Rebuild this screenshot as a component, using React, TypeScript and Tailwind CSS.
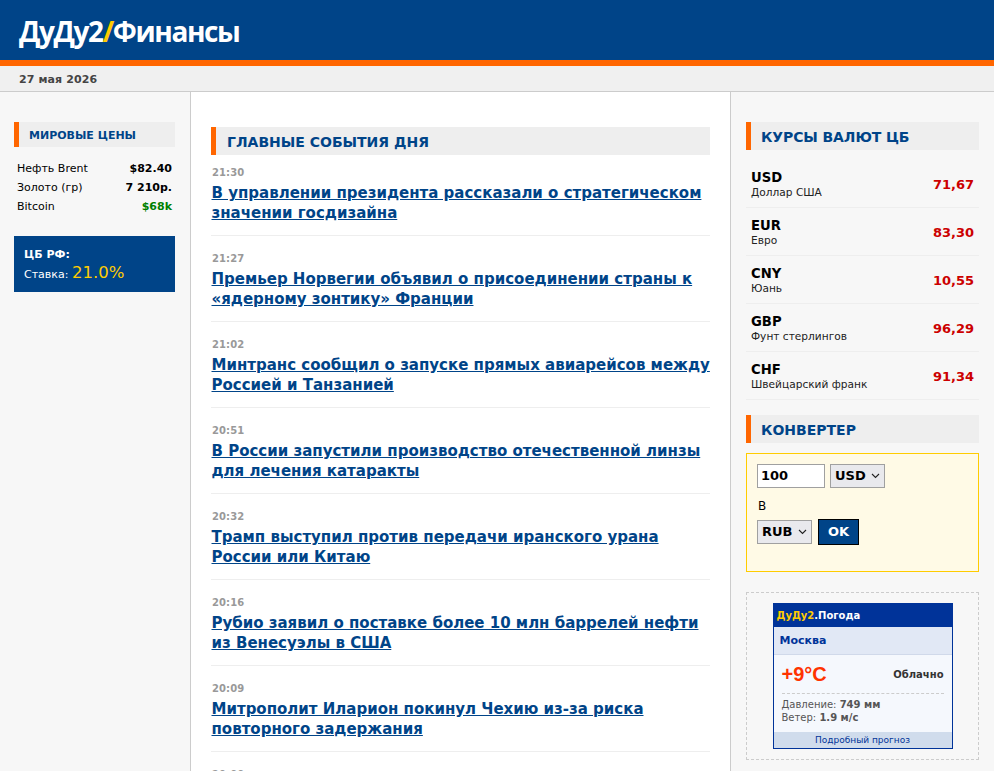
const news = [
  ["21:30", "В управлении президента рассказали о стратегическом значении госдизайна"],
  ["21:27", "Премьер Норвегии объявил о присоединении страны к «ядерному зонтику» Франции"],
  ["21:02", "Минтранс сообщил о запуске прямых авиарейсов между Россией и Танзанией"],
  ["20:51", "В России запустили производство отечественной линзы для лечения катаракты"],
  ["20:32", "Трамп выступил против передачи иранского урана России или Китаю"],
  ["20:16", "Рубио заявил о поставке более 10 млн баррелей нефти из Венесуэлы в США"],
  ["20:09", "Митрополит Иларион покинул Чехию из-за риска повторного задержания"],
  ["20:00", ""],
];
const rates = [
  ["USD", "Доллар США", "71,67"],
  ["EUR", "Евро", "83,30"],
  ["CNY", "Юань", "10,55"],
  ["GBP", "Фунт стерлингов", "96,29"],
  ["CHF", "Швейцарский франк", "91,34"],
];
const Chevron = () => (
  <svg width="9" height="6" viewBox="0 0 9 6" fill="none" stroke="#222" strokeWidth="1.1"><path d="M1 1l3.5 3.5L8 1" /></svg>
);
function Sel({ label, w }: { label: string; w: string }) {
  return (
    <div className={`${w} h-[24px] bg-[#e9e9ed] border border-[#a0a0a0] flex items-center justify-between pl-[4px] pr-[4px] text-[13px] font-bold text-black`}>
      <span>{label}</span><Chevron />
    </div>
  );
}
function Title({ children, cls }: { children: React.ReactNode; cls: string }) {
  return (
    <div className={`bg-[#eeeeee] border-l-[5px] border-[#ff6600] pl-[10px] font-bold text-[#004488] flex items-center ${cls}`}>{children}</div>
  );
}
export default function App() {
  return (
    <div className="h-screen overflow-hidden flex flex-col bg-white font-['DejaVu_Sans','Verdana',sans-serif]">
      <header className="h-[66px] shrink-0 bg-[#004488] border-b-[6px] border-[#ff6600] pl-[19px] pt-[2px] flex items-center">
        <div className="text-[28px] font-bold text-white font-['Open_Sans',sans-serif] tracking-[-1.4px] leading-none">ДуДу2<span className="text-[#ffcc00]">/</span>Финансы</div>
      </header>
      <div className="h-[26px] shrink-0 bg-[#f0f0f0] border-b border-[#cccccc] pl-[19px] pt-[3px] flex items-center text-[11px] font-bold text-[#444444] tracking-[0.1px]">27 мая 2026</div>
      <div className="flex flex-1 min-h-0">
        <aside className="w-[191px] shrink-0 bg-[#f7f7f7] border-r border-[#cccccc] pl-[14px] pr-[15px] pt-[30px]">
          <Title cls="h-[25px] text-[11px] pt-[3px]">МИРОВЫЕ ЦЕНЫ</Title>
          <div className="mt-[13px] px-[3px] text-[11px] text-black">
            <div className="h-[19px] flex items-center justify-between"><span>Нефть Brent</span><b>$82.40</b></div>
            <div className="h-[19px] flex items-center justify-between"><span>Золото (гр)</span><b>7 210р.</b></div>
            <div className="h-[19px] flex items-center justify-between"><span>Bitcoin</span><b className="text-[#008000]">$68k</b></div>
          </div>
          <div className="mt-[19px] h-[56px] bg-[#004488] text-white pl-[10px] pt-[12px] text-[11px]">
            <div className="font-bold leading-[13px]">ЦБ РФ:</div>
            <div className="leading-[22px] mt-[1px]">Ставка: <span className="text-[16.5px] text-[#ffcc00]">21.0%</span></div>
          </div>
        </aside>
        <main className="w-[539px] shrink-0 px-[20px] pt-[35px]">
          <Title cls="h-[28px] text-[14px] pl-[11px] pt-[2px]">ГЛАВНЫЕ СОБЫТИЯ ДНЯ</Title>
          <div className="mt-[11px]">
            {news.map(([t, h]) => (
              <div key={t} className="h-[70px] mb-[16px] border-b border-[#eeeeee]">
                <div className="text-[10px] font-bold text-[#999999] leading-[13px] pl-[1px] tracking-[0.1px]">{t}</div>
                <a href="#" className="block mt-[4px] pl-[0.5px] text-[15px] leading-[20px] font-bold text-[#004488] underline">{h}</a>
              </div>
            ))}
          </div>
        </main>
        <aside className="flex-1 bg-[#f7f7f7] border-l border-[#cccccc] pl-[15px] pr-[15px] pt-[30px]">
          <Title cls="h-[28px] text-[14px] pt-[2px] tracking-[-0.1px]">КУРСЫ ВАЛЮТ ЦБ</Title>
          <div className="mt-[10px]">
            {rates.map(([c, n, v]) => (
              <div key={c} className="h-[48px] border-b border-[#eeeeee] flex items-center justify-between px-[5px]">
                <div className="pt-[2px]">
                  <div className="text-[13.2px] font-bold text-black leading-[15px]">{c}</div>
                  <div className="text-[10.6px] text-[#222222] leading-[15px]">{n}</div>
                </div>
                <div className="text-[13px] font-bold text-[#cc0000] pt-[2px]">{v}</div>
              </div>
            ))}
          </div>
          <Title cls="h-[28px] text-[14px] pt-[2px] mt-[15px]">КОНВЕРТЕР</Title>
          <div className="mt-[10px] h-[119px] bg-[#fffae6] border border-[#ffcc00] pl-[10px] pt-[10px]">
            <div className="flex items-center gap-[5px]">
              <div className="w-[68px] h-[24px] bg-white border border-[#a0a0a0] pl-[3px] text-[13px] font-semibold leading-[22px] text-black">100</div>
              <Sel label="USD" w="w-[55px]" />
            </div>
            <div className="mt-[11px] pl-[1px] text-[12px] text-black leading-[14px]">В</div>
            <div className="mt-[6px] flex items-center gap-[6px]">
              <Sel label="RUB" w="w-[55px]" />
              <div className="w-[41px] h-[26px] bg-[#004488] border border-black text-white font-bold text-[13px] flex items-center justify-center">OK</div>
            </div>
          </div>
          <div className="mt-[20px] h-[168px] border border-dashed border-[#cccccc] pt-[10px] flex justify-center">
            <div className="w-[180px] h-[146px] border border-[#003399] bg-[#f5f8fd] flex flex-col">
              <div className="h-[23px] bg-[#003399] pl-[3px] flex items-center text-[10px] font-bold text-white"><span className="text-[#ffcc00]">ДуДу2</span>.Погода</div>
              <div className="h-[28px] bg-[#e1e8f5] border-b border-[#d0d9ea] pl-[6px] pt-[1px] flex items-center text-[11px] font-bold text-[#003399]">Москва</div>
              <div className="mx-[8px] h-[36px] mt-[1px] flex items-center justify-between">
                <span className="text-[20px] font-bold text-[#ff3300] font-['Liberation_Sans',sans-serif]">+9°C</span>
                <span className="text-[10px] font-bold text-[#333333]">Облачно</span>
              </div>
              <div className="mx-[8px] mt-[1px] pt-[4px] border-t border-dashed border-[#cccccc] text-[10px] text-[#555555] leading-[13px]">
                <div>Давление: <b>749 мм</b></div>
                <div>Ветер: <b>1.9 м/с</b></div>
              </div>
              <div className="mt-auto h-[16px] bg-[#d0dcec] text-center text-[9px] text-[#003399] leading-[16px]">Подробный прогноз</div>
            </div>
          </div>
        </aside>
      </div>
    </div>
  );
}
